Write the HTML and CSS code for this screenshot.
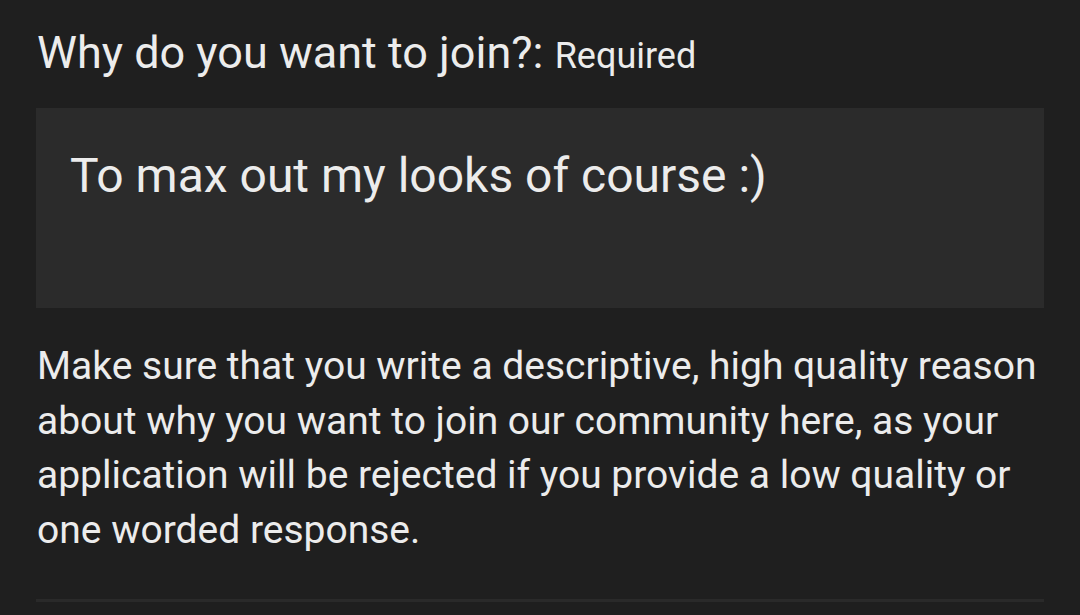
FILE: index.html
```html
<!DOCTYPE html>
<html lang="en">

<head>
    <meta charset="UTF-8">
    <meta name="viewport" content="width=device-width, initial-scale=1.0">
    <title>Application question</title>
    <link rel="stylesheet" href="styles.css">
</head>

<body>
    <main class="question">
        <h2 class="question-title">Why do you want to join?: <span class="required">Required</span></h2>
        <div class="answer">To max out my looks of course :)</div>
        <p class="hint">Make sure that you write a descriptive, high quality reason about why you want to join our community here, as your application will be rejected if you provide a low quality or one worded response.</p>
        <hr class="divider">
    </main>
</body>

</html>
```

FILE: styles.css
```css
* {
    padding: 0;
    margin: 0;
    box-sizing: border-box;
}

body {
    background-color: #1f1f1f;
    color: #ececec;
    font-family: Roboto, "Liberation Sans", sans-serif;
}

.question {
    padding: 25px 36px 0 36px;
}

.question-title {
    font-size: 45px;
    font-weight: 400;
    line-height: 56px;
    padding-left: 1px;
}

.required {
    font-size: 36px;
}

.answer {
    margin-top: 24px;
    height: 200px;
    background-color: #2b2b2b;
    padding: 40px 34px;
    font-size: 48px;
    line-height: 56px;
}

.hint {
    margin-top: 31px;
    font-size: 39px;
    line-height: 54.5px;
    padding-left: 1px;
}

.divider {
    margin-top: 42px;
    border: none;
    height: 3px;
    background-color: #2a2a2a;
}
```
